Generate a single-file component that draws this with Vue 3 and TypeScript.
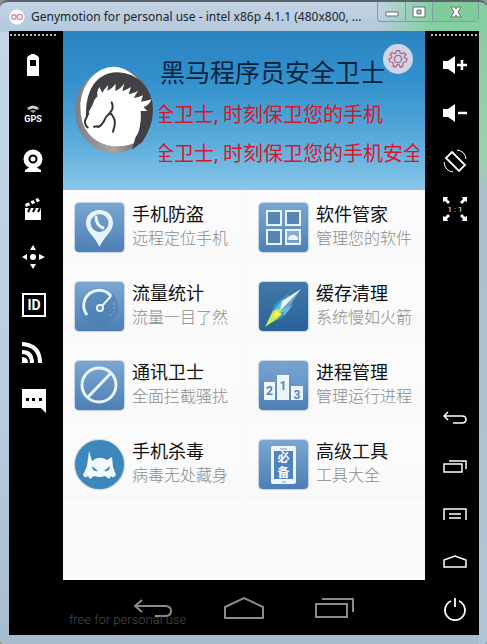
<script setup lang="ts">
interface Tool {
  label: string
  art: string
}

interface Feature {
  title: string
  note: string
  art: string
  round?: boolean
  deep?: boolean
}

const leftTools: Tool[] = [
  { label: 'Battery', art: '<path fill="#fff" fill-rule="evenodd" d="M10 2h4v1h1q3 1 3 3v18H6V6q0-2 3-3h1zM9 8v6h6V8z"/>' },
  { label: 'GPS', art: '<path fill="#ccc" d="M6 8q6-5 12 0l-2 2q-4-3-8 0z"/><path fill="#999" d="M9 11q3-2 6 0l-3 2z"/><text x="12" y="22" text-anchor="middle" font-size="9" font-weight="700" fill="#fff">GPS</text>' },
  { label: 'Camera', art: '<circle cx="12" cy="11" r="7" fill="none" stroke="#fff" stroke-width="5"/><circle cx="12" cy="11" r="2.500" fill="#fff"/><path fill="#fff" d="M9 19h6l5 3v2H4v-2z"/>' },
  { label: 'Recorder', art: '<path fill="#fff" d="M4 12h16v12H4zM4 8l13-6 2 3L5 11z"/><path stroke="#000" stroke-width="2" d="M8 5l3 5M13 3l3 5M9 12l-2 4M14 12l-2 4M19 12l-2 4"/>' },
  { label: 'Move', art: '<circle cx="12" cy="13" r="3" fill="#fff"/><path fill="#fff" d="M12 1l3 5H9zM12 25l3-5H9zM1 13l5-3v6zM24 13l-6-3v6z"/>' },
  { label: 'Identifiers', art: '<path fill="none" stroke="#fff" stroke-width="2" d="M2 2h22v22H2z"/><text x="13" y="18" text-anchor="middle" font-size="14" font-weight="700" fill="#fff">ID</text>' },
  { label: 'Network', art: '<g fill="none" stroke="#fff" stroke-width="4"><path d="M1 4q18 1 18 19M1 12q10 0 10 11"/></g><path fill="#fff" d="M1 17q6 0 6 6H1z"/>' },
  { label: 'Messages', art: '<path fill="#fff" d="M1 1h24v24l-5-5H1z"/><path fill="#000" d="M5 10h3v3H5zM11 10h3v3h-3zM18 10h3v3h-3z"/>' },
]

const rightTools: Tool[] = [
  { label: 'Volume up', art: '<path fill="#fff" d="M1 9h5l7-5v18l-7-5H1z"/><path stroke="#fff" stroke-width="2.500" d="M15 13h10M20 8v10"/>' },
  { label: 'Volume down', art: '<path fill="#fff" d="M1 9h5l7-5v18l-7-5H1z"/><path stroke="#fff" stroke-width="2.500" d="M16 13h9"/>' },
  { label: 'Rotate', art: '<g fill="none" stroke="#fff"><path stroke-width="1.800" d="M10 4l13 13-6 6L4 10z"/><path d="M15 2q8 1 9 9M2 14q1 9 9 10"/></g>' },
  { label: 'Pixel perfect', art: '<g fill="#fff"><path d="M1 1h5L5 3l3 3-2 2-3-3-2 1zM25 1h-5l1 2-3 3 2 2 3-3 2 1zM1 25h5l-1-2 3-3-2-2-3 3-2-1zM25 25h-5l1-2-3-3 2-2 3 3 2-1z"/><text x="13" y="16" text-anchor="middle" font-size="8">1 : 1</text></g>' },
]

const keyTools: Tool[] = [
  { label: 'Back', art: '<path fill="none" stroke="#fff" stroke-width="1.500" d="M6 6L2 10l4 4M2 10h18q4 0 4 3.500T20 17h-9"/>' },
  { label: 'Recent apps', art: '<path fill="none" stroke="#fff" stroke-width="1.500" d="M2 10h18v8H2zM7 7h17v8"/>' },
  { label: 'Menu', art: '<path fill="none" stroke="#fff" stroke-width="1.500" d="M2 18V7h22v11M7 12h12M7 16h12"/>' },
  { label: 'Home', art: '<path fill="none" stroke="#fff" stroke-width="1.500" d="M2 17v-7l11-4 11 4v7z"/>' },
  { label: 'Power', art: '<path fill="none" stroke="#fff" stroke-width="1.800" d="M9 3a10 10 0 1 0 8 0M13 0v9"/>' },
]

const navKeys: Tool[] = [
  { label: '返回', art: '<path d="M10 4l-7 6 7 6M3 10h30q6 0 6 5t-6 5H23"/>' },
  { label: '主屏幕', art: '<path d="M2 22V11L21 2l19 9v11z"/>' },
  { label: '最近任务', art: '<path d="M2 8h31v13H2zM8 3h31v13"/>' },
]

const features: Feature[] = [
  { title: '手机防盗', note: '远程定位手机', art: '<path fill="#e9f3fb" fill-rule="evenodd" d="M24.500 7C17 7 11 12 11 20c0 9 9 13 13.500 24C29 33 38 29 38 20c0-8-6-13-13.500-13zM24.500 11a9 9 0 1 1 0 18 9 9 0 0 1 0-18z"/><path fill="none" stroke="#e9f3fb" stroke-width="3" stroke-linecap="round" d="M21 14q0 8 7 11"/>' },
  { title: '软件管家', note: '管理您的软件', art: '<g fill="#5685b5" stroke="#e9f3fb" stroke-width="2"><path d="M8 8h14v14H8zM27 8h14v14H27zM8 27h14v14H8z"/><path d="M27 27h14v14H27z" fill="#86aed2"/></g><path fill="#e9f3fb" d="M29 37q0-5 5-5t5 5z"/><path stroke="#5685b5" d="M28 38h12"/>' },
  { title: '流量统计', note: '流量一目了然', art: '<circle cx="24" cy="25" r="19" fill="#467caf" opacity=".5"/><path fill="none" stroke="#e9f3fb" stroke-width="3" d="M12 33A15 15 0 1 1 36 14"/><circle cx="25" cy="26" r="3" fill="none" stroke="#e9f3fb" stroke-width="2"/><path stroke="#e9f3fb" stroke-width="2" d="M27 24l9-10"/><path fill="none" stroke="#8ab4da" stroke-dasharray="2 2" d="M39 21q2 8-4 13"/>' },
  { title: '缓存清理', note: '系统慢如火箭', deep: true, art: '<path fill="#36a7d8" opacity=".7" d="M7 43L16 22 29 12 34 23 23 36z"/><path fill="#f0f6f7" d="M42 7L23 19l-5 12 7-2z"/><path fill="#76a5bd" d="M42 7L19 31l11-6z"/><path fill="#5ac3de" d="M24 17L14 30l7-2zM33 24l-8 10-1-7z"/><path fill="#d5e849" d="M6 45l8-16 5-2 4 5-5 5z"/><path fill="#fff15c" d="M14 36l3-7 5 3z"/>' },
  { title: '通讯卫士', note: '全面拦截骚扰', art: '<g fill="none" stroke="#e9f3fb" stroke-width="3"><circle cx="24" cy="24" r="17"/><path d="M13 36l23-24"/></g>' },
  { title: '进程管理', note: '管理运行进程', art: '<path fill="#6f9ed0" opacity=".5" d="M24 0H2L0 20zM25 0l12 32 12-13V0z"/><g fill="#edf4fb"><path d="M5 21h11v18H5zM18 14h12v25H18zM32 25h12v14H32z"/></g><g fill="#5686bd" font-size="12" font-weight="700" text-anchor="middle"><text x="10.500" y="34">2</text><text x="24" y="29">1</text><text x="38" y="38">3</text></g>' },
  { title: '手机杀毒', note: '病毒无处藏身', round: true, art: '<path fill="#f4f9fd" d="M14 11l3 10q7-6 15-1l5-3 1 10 3 8q-3 4-5 1l-2 3-4-3-4 1h-3l-4-1-4 3-2-3q-3 3-5-1l4-9z"/><path fill="#3c88bd" d="M17 26l6 5q-6 1-6-5zM35 26l-6 5q6 1 6-5z"/>' },
  { title: '高级工具', note: '工具大全', art: '<rect x="12" y="6" width="25" height="38" rx="2" fill="#eef5fc"/><path fill="#4e83c1" d="M15 11h19v28H15z"/><path stroke="#779fc9" d="M21 9h7M23 42h4"/><g fill="#fff" font-size="12" font-weight="700" text-anchor="middle"><text x="24.500" y="22">必</text><text x="24.500" y="37">备</text></g>' },
]

const slogans: string[] = ['全卫士, 时刻保卫您的手机', '全卫士, 时刻保卫您的手机安全']
</script>

<template>
  <div class="window">
    <header class="titlebar">
      <svg class="app-icon" viewBox="0 0 18 18" aria-hidden="true">
        <circle cx="9" cy="9" r="8.500" fill="#fff" />
        <g fill="none" stroke="#d984a3" stroke-width="1.500"><circle cx="5.500" cy="9" r="2.500" /><circle cx="12" cy="9" r="3" /></g>
      </svg>
      <h1 class="caption">Genymotion for personal use - intel x86p 4.1.1 (480x800, ...</h1>
      <div class="controls">
        <button type="button" class="control" aria-label="Minimize">
          <svg viewBox="0 0 16 12"><path d="M2 6h12v4H2z" fill="#fff" stroke="#666f7b" /></svg>
        </button>
        <button type="button" class="control" aria-label="Maximize">
          <svg viewBox="0 0 16 12"><path fill-rule="evenodd" d="M2 1h12v10H2zM6 4v4h4V4z" fill="#fff" stroke="#666f7b" /></svg>
        </button>
        <button type="button" class="control close" aria-label="Close">
          <svg viewBox="0 0 16 12"><path d="M3 1h4l1 2 1-2h4l-3 5 3 5H9L8 9l-1 2H3l3-5z" fill="#fff" stroke="#67746f" /></svg>
        </button>
      </div>
    </header>

    <div class="body">
      <aside class="toolbar">
        <div class="grip"></div>
        <button v-for="tool in leftTools" :key="tool.label" type="button" class="tool" :aria-label="tool.label">
          <svg viewBox="0 0 26 26" v-html="tool.art"></svg>
        </button>
      </aside>

      <div class="device">
        <section class="hero">
          <svg class="logo" viewBox="36 108 240 270" aria-hidden="true">
            <defs>
              <linearGradient id="rim" x1="0" y1="0" x2="1" y2="0">
                <stop offset="0" stop-color="#807d81" />
                <stop offset=".5" stop-color="#aaa5a6" />
                <stop offset="1" stop-color="#4b4b50" />
              </linearGradient>
            </defs>
            <ellipse cx="156" cy="242" rx="117" ry="128" fill="url(#rim)" />
            <path fill="#fff" d="M55 220Q63 150 118 119Q168 94 218 138Q246 162 255 220L230 330Q210 350 155 349Q108 345 77 307Q54 280 55 220Z" />
            <path fill="#414145" d="M72 268Q68 178 114 143Q157 115 209 136Q257 160 271 219Q277 284 240 337L210 359L225 305Z" />
            <path fill="#fff" d="M69 278L79 249L93 222Q96 207 106 200Q104 184 112 171L121 188Q128 176 139 165L136 183Q150 176 161 161L160 183Q175 178 187 160L181 184Q195 179 207 171L200 193Q215 190 228 183L215 204Q230 203 243 196L237 215Q253 213 268 208Q263 224 245 232L256 243L236 243Q239 272 230 305Q211 348 164 348Q104 345 77 306Z" />
            <path fill="none" stroke="#333337" stroke-width="6" stroke-linecap="round" d="M79 250l-10 22q-1 14 8 20M149 217q8 17-5 31q-14 12-19 27q-7 12-16 16M144 248q18 18 14 38l-5 19M96 290l10-1" />
          </svg>
          <div class="hero-text">
            <h2 class="hero-title">黑马程序员安全卫士</h2>
            <p v-for="slogan in slogans" :key="slogan" class="slogan"><span>{{ slogan }}</span></p>
          </div>
          <button type="button" class="settings" aria-label="设置">
            <svg viewBox="0 0 22 22" fill="none" stroke="#b0628f" stroke-width="1.500">
              <path d="M9 2h4l.5 3 2 .8L18 4l2.500 3-2 2 .7 2L22 12l-1 3.500-3 .5-1.500 2 .5 3-3 1-2-3h-2l-2 3-3-1 .5-3L4 16l-3-.5L0 12l3-1 .5-2-2-2L4 4l2.500 1.800 2-.8z" transform="translate(1 0) scale(.91)" />
              <circle cx="11" cy="11" r="4" />
            </svg>
          </button>
        </section>

        <main class="features">
          <button v-for="item in features" :key="item.title" type="button" class="feature">
            <svg class="tile" :class="{ round: item.round, deep: item.deep }" viewBox="0 0 49 49" v-html="item.art"></svg>
            <span class="feature-text">
              <span class="feature-title">{{ item.title }}</span>
              <span class="feature-note">{{ item.note }}</span>
            </span>
          </button>
        </main>

        <nav class="navbar">
          <button v-for="key in navKeys" :key="key.label" type="button" class="nav-key" :aria-label="key.label">
            <svg viewBox="0 0 42 24" v-html="key.art"></svg>
          </button>
          <span class="watermark">free for personal use</span>
        </nav>
      </div>

      <aside class="toolbar">
        <div class="grip"></div>
        <button v-for="tool in rightTools" :key="tool.label" type="button" class="tool" :aria-label="tool.label">
          <svg viewBox="0 0 26 26" v-html="tool.art"></svg>
        </button>
        <div class="spacer"></div>
        <button v-for="tool in keyTools" :key="tool.label" type="button" class="tool" :aria-label="tool.label">
          <svg viewBox="0 0 26 26" v-html="tool.art"></svg>
        </button>
      </aside>
    </div>
  </div>
</template>

<style>
body {
  margin: 0;
  background: #8f938f;
}
</style>

<style scoped>
* {
  box-sizing: border-box;
}

button {
  margin: 0;
  padding: 0;
  border: 0;
  background: none;
  font: inherit;
  color: inherit;
}

.window {
  display: flex;
  flex-direction: column;
  min-height: 100vh;
  padding: 0 8px 9px 9px;
  border: 1px solid #59636b;
  border-width: 2px 0 0;
  border-radius: 8px 8px 4px 4px;
  background:
    linear-gradient(90deg, transparent 78%, #86cfa3 88%) top / 100% 30px no-repeat,
    linear-gradient(180deg, #c3d2e2, #b3c9dd) top / 100% 30px no-repeat,
    linear-gradient(180deg, #8cc7a0 0, #9bd2ad 24%, #a9bfca 30%, #b2c6d5 100%) right / 8px 100% no-repeat,
    linear-gradient(180deg, #c7d6e6 0, #b8cee2 60%, #a7bccd 100%);
  font-family: Roboto, "Noto Sans CJK SC", sans-serif;
}

.titlebar {
  display: flex;
  align-items: center;
  height: 29px;
  gap: 6px;
}

.app-icon {
  flex: none;
  width: 16px;
  height: 16px;
}

.caption {
  flex: 1;
  min-width: 0;
  margin: 0;
  overflow: hidden;
  color: #20242a;
  font: 400 12px/20px "Noto Sans", "Open Sans", sans-serif;
  white-space: nowrap;
}

.controls {
  display: flex;
  align-self: flex-start;
  height: 20px;
  border: 1px solid #8798a7;
  border-top: 0;
  border-radius: 0 0 4px 4px;
}

.control {
  display: flex;
  align-items: center;
  justify-content: center;
  width: 27px;
}

.control + .control {
  border-left: 1px solid #8798a7;
}

.control svg {
  width: 16px;
  height: 12px;
}

.control.close {
  width: 46px;
  background: #80cb9b;
}

.body {
  display: flex;
  flex: 1;
  gap: 5px;
  background: #000;
}

.toolbar {
  display: flex;
  flex: none;
  flex-direction: column;
  width: 49px;
}

.grip {
  height: 2px;
  margin: 3px 1px 5px;
  background: repeating-linear-gradient(90deg, #bbb 0 2px, #000 2px 4px);
}

.tool {
  display: flex;
  align-items: center;
  justify-content: center;
  height: 48px;
}

.tool svg {
  width: 26px;
  height: 26px;
}

.spacer {
  flex: 1;
}

.device {
  display: flex;
  flex: 1;
  flex-direction: column;
  min-width: 0;
  background: #fafafa;
}

.hero {
  position: relative;
  display: flex;
  align-items: flex-start;
  gap: 5px;
  height: 159px;
  padding: 26px 6px 0 11px;
  background: linear-gradient(180deg, #2b84c1 0, #3290cc 30%, #56a8d8 65%, #87c7ea 100%);
}

.logo {
  flex: none;
  width: 80px;
  height: 90px;
  margin-top: 9px;
}

.hero-text {
  flex: 1;
  min-width: 0;
}

.hero-title {
  margin: 0 0 5px 1px;
  color: #06233c;
  font-size: 25px;
  font-weight: 400;
  line-height: 34px;
  white-space: nowrap;
}

.slogan {
  display: flex;
  margin: 0;
  overflow: hidden;
  color: #d8152b;
  font-size: 20px;
  line-height: 39px;
  white-space: nowrap;
}

.slogan span {
  margin-left: -5px;
}

.settings {
  position: absolute;
  top: 13px;
  right: 12px;
  display: flex;
  align-items: center;
  justify-content: center;
  width: 30px;
  height: 30px;
  border-radius: 50%;
  background: #cfd6e3;
}

.settings svg {
  width: 20px;
  height: 20px;
}

.features {
  display: grid;
  flex: 1;
  grid-template-columns: 1fr 1fr;
  grid-auto-rows: 79px;
  column-gap: 6px;
}

.feature {
  display: flex;
  align-items: flex-start;
  gap: 8px;
  padding: 13px 0 0 12px;
  background: linear-gradient(180deg, #fbfbfb 40%, #f8f8f8 94%, #fbfbfb 94%);
  text-align: left;
}

.tile {
  flex: none;
  width: 49px;
  height: 49px;
  border-radius: 4px;
  background: linear-gradient(180deg, #7ba6d1, #4d7fb5);
  box-shadow: 0 0 1px 1px #c3d3e2;
}

.tile.deep {
  background: linear-gradient(180deg, #4279a9, #286298);
}

.tile.round {
  border-radius: 50%;
  background: #3c88bd;
}

.feature-text {
  display: flex;
  flex-direction: column;
  white-space: nowrap;
}

.feature-title {
  color: #111;
  font-size: 18px;
  line-height: 24px;
}

.feature-note {
  color: #8c8c8c;
  font-size: 16px;
  font-weight: 300;
  line-height: 23px;
}

.navbar {
  position: relative;
  display: flex;
  align-items: center;
  justify-content: center;
  gap: 49px;
  height: 55px;
  background: #000;
}

.nav-key svg {
  display: block;
  width: 42px;
  height: 24px;
  fill: none;
  stroke: #8b8b8b;
  stroke-width: 2;
}

.watermark {
  position: absolute;
  bottom: 6px;
  left: 6px;
  color: #4a4a4a;
  font-size: 13px;
  font-weight: 300;
  line-height: 18px;
}
</style>
